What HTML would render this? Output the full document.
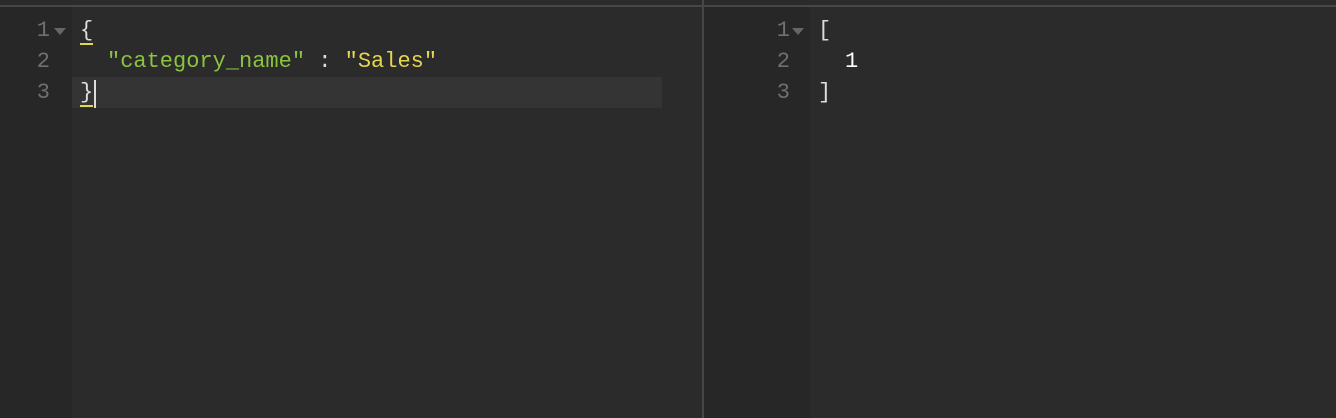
<!DOCTYPE html>
<html><head><style>
html,body{margin:0;padding:0;width:1336px;height:418px;background:#2b2b2b;overflow:hidden;font-family:"Liberation Mono",monospace;font-size:22px;}
.top{position:absolute;left:0;top:5px;width:1336px;height:2px;background:#474747;}
.div{position:absolute;left:702px;top:0;width:2px;height:418px;background:#474747;}
.g{position:absolute;top:7px;bottom:0;background:#272727;}
.act{position:absolute;left:72px;top:77px;width:590px;height:31px;background:#343434;}
.ln{position:absolute;color:#707070;line-height:31px;text-align:right;width:20px;}
.tri{position:absolute;width:0;height:0;border-left:6px solid transparent;border-right:6px solid transparent;border-top:7px solid #666;}
.c{position:absolute;line-height:31px;white-space:pre;color:#ddd;}
.gr{color:#8ac43f}.ye{color:#e6d54f}
.u{border-bottom:2px solid #e6d54f;}
</style></head><body>
<div class="top"></div>
<div class="g" style="left:0;width:72px"></div>
<div class="g" style="left:704px;width:106px"></div>
<div class="act"></div>
<div class="div"></div>
<div class="ln" style="left:30px;top:15px">1</div>
<div class="ln" style="left:30px;top:46px">2</div>
<div class="ln" style="left:30px;top:77px">3</div>
<div class="tri" style="left:54px;top:28px"></div>
<div class="c" style="left:80px;top:15px"><span class="u">{</span></div>
<div class="c" style="left:107px;top:46px"><span class="gr">"category_name"</span> : <span class="ye">"Sales"</span></div>
<div class="c" style="left:80px;top:77px"><span class="u">}</span></div>
<div style="position:absolute;left:94px;top:80px;width:2px;height:28px;background:#ddd"></div>
<div class="ln" style="left:770px;top:15px">1</div>
<div class="ln" style="left:770px;top:46px">2</div>
<div class="ln" style="left:770px;top:77px">3</div>
<div class="tri" style="left:792px;top:28px"></div>
<div class="c" style="left:818px;top:15px">[</div>
<div class="c" style="left:845px;top:46px;color:#fff">1</div>
<div class="c" style="left:818px;top:77px">]</div>
</body></html>
